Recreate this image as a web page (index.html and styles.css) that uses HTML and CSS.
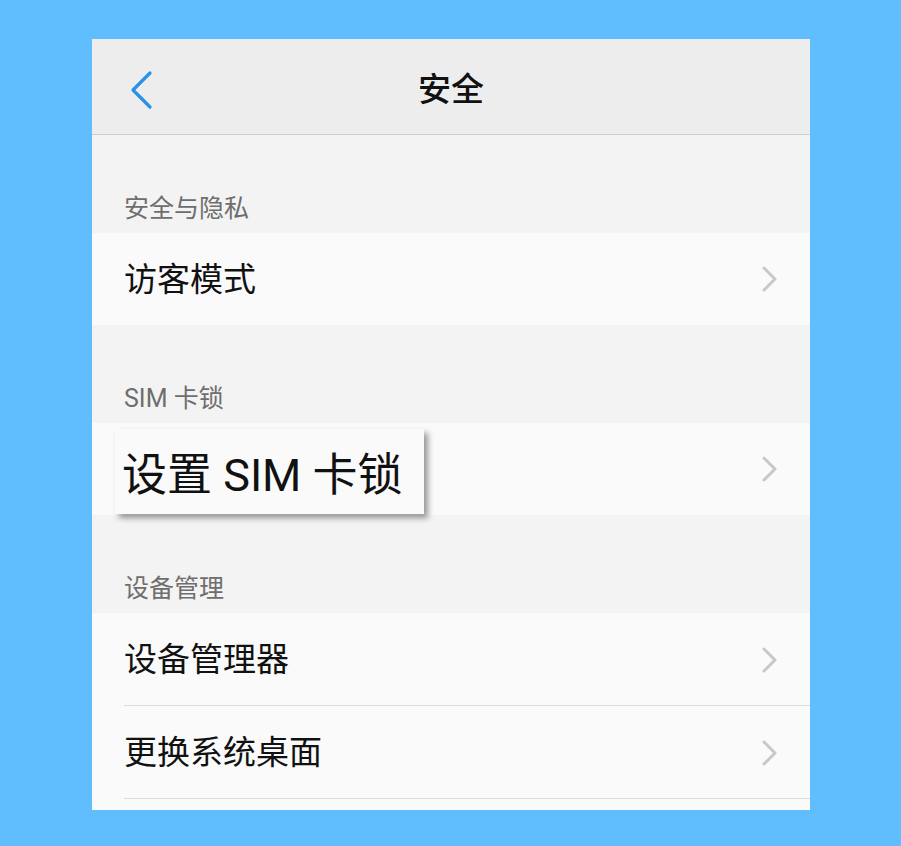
FILE: index.html
```html
<!DOCTYPE html>
<html lang="zh-CN">
<head>
<meta charset="utf-8">
<title>安全</title>
<link rel="stylesheet" href="styles.css">
</head>
<body>
<div class="screen">
  <header class="topbar">
    <svg class="back" width="24" height="40" viewBox="0 0 24 40"><path d="M20 3 L3 20 L20 37" fill="none" stroke="#2a90e8" stroke-width="3.2" stroke-linecap="round" stroke-linejoin="round"/></svg>
    <h1 class="title">安全</h1>
  </header>
  <div class="label">安全与隐私</div>
  <div class="row"><span class="text">访客模式</span><svg class="chev" width="18" height="28" viewBox="0 0 18 28"><path d="M3 3 L14 14 L3 25" fill="none" stroke="#c8c8c8" stroke-width="3" stroke-linecap="round" stroke-linejoin="round"/></svg></div>
  <div class="label">SIM 卡锁</div>
  <div class="row"><span class="callout">设置 SIM 卡锁</span><svg class="chev" width="18" height="28" viewBox="0 0 18 28"><path d="M3 3 L14 14 L3 25" fill="none" stroke="#c8c8c8" stroke-width="3" stroke-linecap="round" stroke-linejoin="round"/></svg></div>
  <div class="label">设备管理</div>
  <div class="row divided"><span class="text">设备管理器</span><svg class="chev" width="18" height="28" viewBox="0 0 18 28"><path d="M3 3 L14 14 L3 25" fill="none" stroke="#c8c8c8" stroke-width="3" stroke-linecap="round" stroke-linejoin="round"/></svg></div>
  <div class="row divided"><span class="text">更换系统桌面</span><svg class="chev" width="18" height="28" viewBox="0 0 18 28"><path d="M3 3 L14 14 L3 25" fill="none" stroke="#c8c8c8" stroke-width="3" stroke-linecap="round" stroke-linejoin="round"/></svg></div>
  <div class="tail"></div>
</div>
</body>
</html>
```
FILE: styles.css
```css
html, body {
  margin: 0;
  padding: 0;
}
body {
  background: #61befe;
  width: 901px;
  height: 846px;
  overflow: hidden;
  font-family: Roboto, "Noto Sans CJK SC", "Noto Sans", sans-serif;
}
.screen {
  margin: 39px 0 0 92px;
  width: 718px;
  height: 771px;
  background: #f3f3f3;
  display: flex;
  flex-direction: column;
  overflow: hidden;
}
.topbar {
  height: 95px;
  border-bottom: 1px solid #cfcfcf;
  background: #ededed;
  display: flex;
  align-items: center;
  justify-content: center;
  position: relative;
  flex: none;
}
.back {
  position: absolute;
  left: 38px;
  top: 31px;
}
.title {
  margin: 0;
  font-family: "Noto Sans CJK SC", sans-serif;
  font-size: 33px;
  font-weight: 500;
  color: #111;
  line-height: 1;
  padding-top: 2px;
}
.label {
  height: 98px;
  flex: none;
  box-sizing: border-box;
  display: flex;
  align-items: flex-end;
  padding: 0 0 9px 32px;
  font-size: 25px;
  line-height: 30px;
  color: #6e6e6e;
}
.row {
  height: 92px;
  flex: none;
  box-sizing: border-box;
  background: #fafafa;
  display: flex;
  align-items: center;
  justify-content: space-between;
  padding: 0 31px 0 32px;
}
.text {
  font-size: 33px;
  color: #111;
  line-height: 1;
}
.chev {
  flex: none;
}
.row.divided {
  height: 93px;
  background: #fafafa linear-gradient(#dcdcdc, #dcdcdc) no-repeat 32px 100% / 100% 1px;
}
.callout {
  margin-left: -9px;
  margin-top: 4px;
  height: 85px;
  box-sizing: border-box;
  display: flex;
  align-items: center;
  padding: 0 21px 0 7px;
  background: #fafafa;
  box-shadow: 4px 4px 6px rgba(0, 0, 0, 0.4);
  font-size: 45px;
  color: #111;
}
.tail {
  flex: 1;
  background: #fafafa;
}
```
